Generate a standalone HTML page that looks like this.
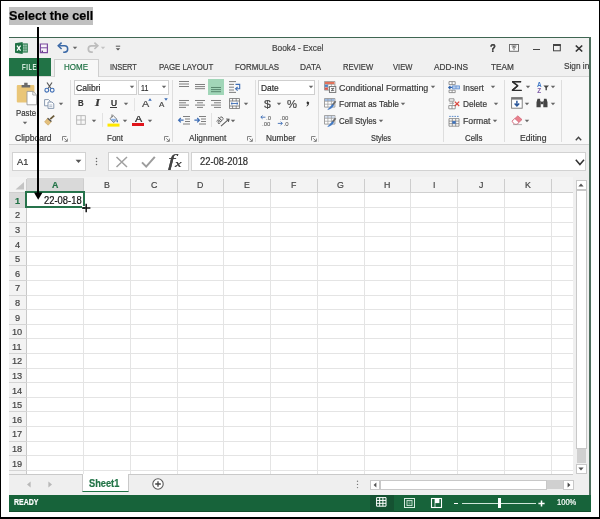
<!DOCTYPE html>
<html>
<head>
<meta charset="utf-8">
<title>Select the cell</title>
<style>
*{box-sizing:border-box;margin:0;padding:0}
html,body{width:600px;height:519px;overflow:hidden;background:#fff}
body{position:relative;font-family:"Liberation Sans",sans-serif;color:#444;font-size:9px}
.a{position:absolute}
svg{overflow:visible}
.t{position:absolute;white-space:nowrap;line-height:1;-webkit-text-stroke:0.2px currentColor}
#in,#ov{will-change:transform}
#frame{left:0;top:0;width:600px;height:519px;border:1px solid #000;border-bottom-width:2px;z-index:50;pointer-events:none}
#label{left:9px;top:7px;width:84px;height:18px;background:#c0c0c0}
#win{left:9px;top:37px;width:582px;height:475px;background:#f0f0f0;border:1px solid #3f6652;border-left:none;border-bottom:none;border-right:none;overflow:hidden}
#in{left:-9px;top:-38px;width:600px;height:519px}
.sep{width:1px;top:80px;height:62px;background:#dedede}
.vl{top:192px;width:1px;height:282px;background:#e4e4e4}
.vh{top:179px;width:1px;height:13px;background:#cdcdcd}
.hl{left:26px;height:1px;width:547.3px;background:#e4e4e4}
</style>
</head>
<body>
<div class="a" id="label"></div>
<div class="a" id="win"><div class="a" id="in">
<svg class="a" style="left:14.8px;top:41.8px;" width="14" height="12" viewBox="0 0 14 12"><rect x="6" y="1.4" width="6.8" height="9.2" fill="#2a7a4e"/><path d="M8.9 2.6v6.8M11 2.6v6.8" stroke="#cfe8da" stroke-width="1.2"/><path d="M7.5 4.8h5M7.5 7.2h5" stroke="#2a7a4e" stroke-width="0.6"/><path d="M0 1.3L7.6 0v12L0 10.7z" fill="#1f7145"/><path d="M2 3.6L5.6 8.6M5.6 3.6L2 8.6" stroke="#fff" stroke-width="1.3"/></svg>
<svg class="a" style="left:38.5px;top:42.6px;" width="10" height="10" viewBox="0 0 10 10"><path d="M1.4 1h7v8.6h-7z" fill="#f6f2f9" stroke="#7a4a9e" stroke-width="1.2"/><path d="M1.4 4.8h7" stroke="#7a4a9e" stroke-width="1"/><rect x="2.6" y="7.6" width="1.4" height="1.4" fill="#5a3a7a"/></svg>
<svg class="a" style="left:57px;top:42px;" width="13" height="11" viewBox="0 0 13 11"><path d="M2.2 3.8h5.3a3.2 3.2 0 0 1 0 6.4h-1.3" fill="none" stroke="#3a68a6" stroke-width="1.5"/><path d="M4.6 0.6L1.2 3.8L4.6 7" fill="none" stroke="#3a68a6" stroke-width="1.5"/></svg>
<svg class="a" style="left:71.5px;top:45.5px;" width="6" height="4" viewBox="0 0 6 4"><polygon points="0.8,0.8 5.2,0.8 3,3.2" fill="#666"/></svg>
<svg class="a" style="left:86px;top:42px;" width="13" height="11" viewBox="0 0 13 11"><path d="M10.8 3.8h-5.3a3.2 3.2 0 0 0 0 6.4h1.3" fill="none" stroke="#bdbdbd" stroke-width="1.7"/><path d="M8.4 0.6L11.8 3.8L8.4 7" fill="none" stroke="#bdbdbd" stroke-width="1.7"/></svg>
<svg class="a" style="left:100px;top:45.5px;" width="6" height="4" viewBox="0 0 6 4"><polygon points="0.8,0.8 5.2,0.8 3,3.2" fill="#c4c4c4"/></svg>
<svg class="a" style="left:114.8px;top:45.3px;" width="6" height="7" viewBox="0 0 6 7"><path d="M0.8 1.2h4.4" stroke="#555" stroke-width="1"/><polygon points="0.8,3.2 5.2,3.2 3,5.6" fill="#555"/></svg>
<div class="t" style="left:271.50px;top:43.89px;font-size:9.2px;color:#444;transform:scaleX(0.9074);transform-origin:0 50%;">Book4 - Excel</div>
<div class="t" style="left:490.20px;top:42.57px;font-size:11.5px;color:#444;transform:scaleX(0.8257);transform-origin:0 50%;font-weight:bold;text-shadow:0 0 0.3px #444;">?</div>
<svg class="a" style="left:509.3px;top:44.2px;" width="10" height="8" viewBox="0 0 10 8"><rect x="0.5" y="0.5" width="9" height="6.8" fill="#fbfbfb" stroke="#6e6e6e" stroke-width="1"/><path d="M5 6.2V2.6M3.2 4.2L5 2.4L6.8 4.2M2.6 2h4.8" fill="none" stroke="#555" stroke-width="0.9"/></svg>
<div class="a" style="left:532.5px;top:48.7px;width:7px;height:1.8px;background:#444;"></div>
<svg class="a" style="left:553.2px;top:44.3px;" width="8" height="8" viewBox="0 0 8 8"><rect x="0.5" y="1" width="6.8" height="5.8" fill="none" stroke="#444" stroke-width="1"/><rect x="0" y="0" width="7.8" height="2" fill="#444"/></svg>
<svg class="a" style="left:574.5px;top:44.5px;" width="8" height="7" viewBox="0 0 8 7"><path d="M0.8 0.5L7.2 6.5M7.2 0.5L0.8 6.5" stroke="#333" stroke-width="1.7"/></svg>
<div class="a" style="left:9px;top:58.3px;width:41.5px;height:17.7px;background:#217346;"></div>
<div class="t" style="left:22.00px;top:62.74px;font-size:9.3px;color:#f2fff6;transform:scaleX(0.6405);transform-origin:0 50%;letter-spacing:1.0px;">FILE</div>
<div class="a" style="left:9px;top:76px;width:581px;height:68.5px;background:#f8f8f8;"></div>
<div class="a" style="left:9px;top:75.8px;width:581px;height:1px;background:#d8d8d8;"></div>
<div class="a" style="left:54px;top:58.7px;width:44.5px;height:18.3px;background:#f8f8f8;border:1px solid #cfcfcf;border-bottom:none"></div>
<div class="t" style="left:64.00px;top:63.04px;font-size:8.7px;color:#217346;transform:scaleX(0.9195);transform-origin:0 50%;">HOME</div>
<div class="t" style="left:110.00px;top:63.04px;font-size:8.7px;color:#3c3c3c;transform:scaleX(0.8442);transform-origin:0 50%;">INSERT</div>
<div class="t" style="left:158.80px;top:63.04px;font-size:8.7px;color:#3c3c3c;transform:scaleX(0.9050);transform-origin:0 50%;">PAGE LAYOUT</div>
<div class="t" style="left:234.80px;top:63.04px;font-size:8.7px;color:#3c3c3c;transform:scaleX(0.9103);transform-origin:0 50%;">FORMULAS</div>
<div class="t" style="left:300.00px;top:63.04px;font-size:8.7px;color:#3c3c3c;transform:scaleX(0.9584);transform-origin:0 50%;">DATA</div>
<div class="t" style="left:342.60px;top:63.04px;font-size:8.7px;color:#3c3c3c;transform:scaleX(0.8799);transform-origin:0 50%;">REVIEW</div>
<div class="t" style="left:393.00px;top:63.04px;font-size:8.7px;color:#3c3c3c;transform:scaleX(0.8725);transform-origin:0 50%;">VIEW</div>
<div class="t" style="left:434.40px;top:63.04px;font-size:8.7px;color:#3c3c3c;transform:scaleX(0.9561);transform-origin:0 50%;">ADD-INS</div>
<div class="t" style="left:490.70px;top:63.04px;font-size:8.7px;color:#3c3c3c;transform:scaleX(0.9476);transform-origin:0 50%;">TEAM</div>
<div class="t" style="left:563.70px;top:60.65px;font-size:9.7px;color:#3c3c3c;transform:scaleX(0.8531);transform-origin:0 50%;">Sign in</div>
<div class="a" style="left:9px;top:144px;width:581px;height:1px;background:#d2d2d2;"></div>
<div class="a" style="left:9px;top:145px;width:581px;height:349.5px;background:#efefef;"></div>
<div class="a sep" style="left:69.7px"></div>
<div class="a sep" style="left:171.7px"></div>
<div class="a sep" style="left:254.7px"></div>
<div class="a sep" style="left:318.2px"></div>
<div class="a sep" style="left:443px"></div>
<div class="a sep" style="left:504.2px"></div>
<div class="a sep" style="left:560.7px"></div>
<div class="t" style="left:14.50px;top:133.69px;font-size:9px;color:#383838;transform:scaleX(0.9476);transform-origin:0 50%;">Clipboard</div>
<svg class="a" style="left:62px;top:136px;" width="6" height="6" viewBox="0 0 6 6"><path d="M0.5 4.5V0.5H4.5" fill="none" stroke="#777" stroke-width="0.9"/><path d="M2.3 2.3L5 5M5.4 2.6V5.4H2.6" fill="none" stroke="#777" stroke-width="0.9"/></svg>
<div class="t" style="left:107.00px;top:133.69px;font-size:9px;color:#383838;transform:scaleX(0.8885);transform-origin:0 50%;">Font</div>
<svg class="a" style="left:164px;top:136px;" width="6" height="6" viewBox="0 0 6 6"><path d="M0.5 4.5V0.5H4.5" fill="none" stroke="#777" stroke-width="0.9"/><path d="M2.3 2.3L5 5M5.4 2.6V5.4H2.6" fill="none" stroke="#777" stroke-width="0.9"/></svg>
<div class="t" style="left:188.70px;top:133.69px;font-size:9px;color:#383838;transform:scaleX(0.9321);transform-origin:0 50%;">Alignment</div>
<svg class="a" style="left:247px;top:136px;" width="6" height="6" viewBox="0 0 6 6"><path d="M0.5 4.5V0.5H4.5" fill="none" stroke="#777" stroke-width="0.9"/><path d="M2.3 2.3L5 5M5.4 2.6V5.4H2.6" fill="none" stroke="#777" stroke-width="0.9"/></svg>
<div class="t" style="left:266.00px;top:133.69px;font-size:9px;color:#383838;transform:scaleX(0.9217);transform-origin:0 50%;">Number</div>
<svg class="a" style="left:310.5px;top:136px;" width="6" height="6" viewBox="0 0 6 6"><path d="M0.5 4.5V0.5H4.5" fill="none" stroke="#777" stroke-width="0.9"/><path d="M2.3 2.3L5 5M5.4 2.6V5.4H2.6" fill="none" stroke="#777" stroke-width="0.9"/></svg>
<div class="t" style="left:371.00px;top:133.69px;font-size:9px;color:#383838;transform:scaleX(0.8161);transform-origin:0 50%;">Styles</div>
<div class="t" style="left:465.00px;top:133.69px;font-size:9px;color:#383838;transform:scaleX(0.8748);transform-origin:0 50%;">Cells</div>
<div class="t" style="left:519.50px;top:133.69px;font-size:9px;color:#383838;transform:scaleX(0.9630);transform-origin:0 50%;">Editing</div>
<svg class="a" style="left:575px;top:135.5px;" width="7" height="5" viewBox="0 0 7 5"><path d="M0.8 4.2L3.5 1.3L6.2 4.2" fill="none" stroke="#444" stroke-width="1.4"/></svg>
<svg class="a" style="left:16px;top:81.5px;" width="21" height="24" viewBox="0 0 21 24"><rect x="0.8" y="3" width="17.6" height="17.6" rx="1" fill="#eac678"/><path d="M5.6 5.4V3h2.6V0.8h3.4V3h2.6V5.4z" fill="#6a6a6a"/><path d="M11 9.4h6l3.6 3.4V22.8H11z" fill="#fff" stroke="#9a9a9a" stroke-width="0.9"/><path d="M16.8 9.6v3.4h3.6" fill="none" stroke="#9a9a9a" stroke-width="0.8"/></svg>
<div class="t" style="left:15.70px;top:107.84px;font-size:9.5px;color:#383838;transform:scaleX(0.8274);transform-origin:0 50%;">Paste</div>
<svg class="a" style="left:22px;top:121px;" width="6" height="4" viewBox="0 0 6 4"><polygon points="0.8,0.8 5.2,0.8 3,3.2" fill="#666"/></svg>
<svg class="a" style="left:44px;top:82px;" width="11" height="11" viewBox="0 0 11 11"><path d="M3 0.5L7 6.5M8 0.5L4 6.5" stroke="#5a5a5a" stroke-width="1.2" fill="none"/><circle cx="2.8" cy="8.2" r="1.9" fill="none" stroke="#3d6db5" stroke-width="1.1"/><circle cx="8.2" cy="8.2" r="1.9" fill="none" stroke="#3d6db5" stroke-width="1.1"/></svg>
<svg class="a" style="left:44px;top:98.5px;" width="11" height="10" viewBox="0 0 11 10"><path d="M0.6 0.6h4l1.6 1.6v4.6h-5.6z" fill="#fff" stroke="#7d8ea8" stroke-width="0.9"/><path d="M4 3h4l1.8 1.8v4.6H4z" fill="#fff" stroke="#7d8ea8" stroke-width="0.9"/><path d="M5.3 6h3M5.3 7.6h3" stroke="#7d8ea8" stroke-width="0.6"/></svg>
<svg class="a" style="left:58px;top:102px;" width="6" height="4" viewBox="0 0 6 4"><polygon points="0.8,0.8 5.2,0.8 3,3.2" fill="#666"/></svg>
<svg class="a" style="left:44px;top:115px;" width="12" height="11" viewBox="0 0 12 11"><path d="M6.2 4.2L10.2 0.6" stroke="#6a5a3a" stroke-width="1.8"/><path d="M3.6 3.2L7.4 6.6L4.2 10.2L0.6 7z" fill="#e3bf7c" stroke="#c9a25a" stroke-width="0.6"/><path d="M3.6 3.2L7.4 6.6" stroke="#555" stroke-width="1.3"/></svg>
<div class="a" style="left:73.5px;top:79.5px;width:63.7px;height:15.6px;background:#fff;border:1px solid #cfcfcf"></div>
<div class="a" style="left:138px;top:79.5px;width:31.4px;height:15.6px;background:#fff;border:1px solid #cfcfcf"></div>
<div class="t" style="left:76.00px;top:82.75px;font-size:9.5px;color:#2a2a2a;transform:scaleX(0.9100);transform-origin:0 50%;">Calibri</div>
<svg class="a" style="left:129px;top:85.3px;" width="6" height="4" viewBox="0 0 6 4"><polygon points="0.8,0.8 5.2,0.8 3,3.2" fill="#666"/></svg>
<div class="t" style="left:140.90px;top:82.64px;font-size:9.5px;color:#2a2a2a;transform:scaleX(0.7403);transform-origin:0 50%;">11</div>
<svg class="a" style="left:160.7px;top:85.3px;" width="6" height="4" viewBox="0 0 6 4"><polygon points="0.8,0.8 5.2,0.8 3,3.2" fill="#666"/></svg>
<div class="t" style="left:78.30px;top:98.99px;font-size:9.2px;color:#3a3a3a;transform:scaleX(0.8579);transform-origin:0 50%;font-weight:bold;">B</div>
<div class="t" style="left:95.00px;top:99.05px;font-size:9.5px;color:#3a3a3a;transform:scaleX(1.3522);transform-origin:0 50%;font-weight:bold;font-style:italic;font-family:'Liberation Serif',serif;">I</div>
<div class="t" style="left:110.70px;top:98.69px;font-size:9px;color:#3a3a3a;transform:scaleX(0.9231);transform-origin:0 50%;text-shadow:0 0 0.4px #3a3a3a;">U</div>
<div class="a" style="left:110.3px;top:107.3px;width:6.8px;height:0.9px;background:#3a3a3a;"></div>
<svg class="a" style="left:122.7px;top:101.8px;" width="6" height="4" viewBox="0 0 6 4"><polygon points="0.8,0.8 5.2,0.8 3,3.2" fill="#666"/></svg>
<div class="a" style="left:133.5px;top:97.5px;width:1px;height:13px;background:#e4e4e4;"></div>
<div class="t" style="left:141.80px;top:99.40px;font-size:9.8px;color:#444;transform:scaleX(1.1014);transform-origin:0 50%;">A</div>
<svg class="a" style="left:147.5px;top:98px;" width="4" height="3" viewBox="0 0 4 3"><polygon points="0.2,2.8 3.8,2.8 2,0.3" fill="#3d6db5"/></svg>
<div class="t" style="left:158.70px;top:101.08px;font-size:8px;color:#444;transform:scaleX(0.9932);transform-origin:0 50%;">A</div>
<svg class="a" style="left:163.7px;top:98px;" width="4" height="3" viewBox="0 0 4 3"><polygon points="0.2,0.3 3.8,0.3 2,2.8" fill="#3d6db5"/></svg>
<svg class="a" style="left:76px;top:115px;" width="10" height="10" viewBox="0 0 10 10"><path d="M0.6 0.6h8.8v8.8h-8.8zM5 0.6v8.8M0.6 5h8.8" fill="none" stroke="#b5b5b5" stroke-width="0.9"/></svg>
<svg class="a" style="left:91px;top:118.5px;" width="6" height="4" viewBox="0 0 6 4"><polygon points="0.8,0.8 5.2,0.8 3,3.2" fill="#666"/></svg>
<div class="a" style="left:101.5px;top:113px;width:1px;height:14px;background:#e2e2e2;"></div>
<svg class="a" style="left:107.5px;top:113.5px;" width="11" height="13" viewBox="0 0 11 13"><path d="M2 4.6L5.2 1.6L9 5.4L5.6 8.6z" fill="#fff" stroke="#6a6a6a" stroke-width="0.9"/><path d="M4 0.4v3" stroke="#6a6a6a" stroke-width="0.9"/><path d="M9.2 5.6c1 1.4 1 2.4 0 2.8c-0.9-0.4-0.9-1.4 0-2.8z" fill="#3d6db5"/><path d="M2.4 4.8h6.2L5.6 8z" fill="#8fb4e6"/><rect x="-0.5" y="9.6" width="12" height="3" fill="#ffe800"/></svg>
<svg class="a" style="left:122px;top:118.5px;" width="6" height="4" viewBox="0 0 6 4"><polygon points="0.8,0.8 5.2,0.8 3,3.2" fill="#666"/></svg>
<div class="t" style="left:134.50px;top:114.89px;font-size:9px;color:#444;transform:scaleX(1.1993);transform-origin:0 50%;text-shadow:0 0 0.4px #444;">A</div>
<div class="a" style="left:132.2px;top:123.2px;width:11.5px;height:3.3px;background:#e0141b;"></div>
<svg class="a" style="left:147px;top:118.5px;" width="6" height="4" viewBox="0 0 6 4"><polygon points="0.8,0.8 5.2,0.8 3,3.2" fill="#666"/></svg>
<svg class="a" style="left:179px;top:80.6px;" width="10" height="8.5" viewBox="0 0 10 8.5"><path d="M0.0 0.5h10" stroke="#707070" stroke-width="0.9"/><path d="M0.0 3.0h10" stroke="#707070" stroke-width="0.9"/><path d="M0.0 5.5h10" stroke="#707070" stroke-width="0.9"/></svg>
<svg class="a" style="left:195px;top:84.3px;" width="10" height="7.300000000000001" viewBox="0 0 10 7.300000000000001"><path d="M0.0 0.5h10" stroke="#707070" stroke-width="0.9"/><path d="M0.0 2.6h10" stroke="#707070" stroke-width="0.9"/><path d="M0.0 4.7h10" stroke="#707070" stroke-width="0.9"/></svg>
<div class="a" style="left:208px;top:79px;width:16.2px;height:16.2px;background:#a1d6b8;"></div>
<svg class="a" style="left:211px;top:87.4px;" width="10" height="7.300000000000001" viewBox="0 0 10 7.300000000000001"><path d="M0.0 0.5h10" stroke="#4f7f66" stroke-width="0.9"/><path d="M0.0 2.6h10" stroke="#4f7f66" stroke-width="0.9"/><path d="M0.0 4.7h10" stroke="#4f7f66" stroke-width="0.9"/></svg>
<svg class="a" style="left:229px;top:81px;" width="12" height="12" viewBox="0 0 12 12"><path d="M0 0.6h7M0 3.4h5M0 6.2h5M0 9h5M0 11.4h7" stroke="#707070" stroke-width="0.9"/><path d="M6.5 3.4h4.2v4.4H7.2" fill="none" stroke="#3d6db5" stroke-width="1.1"/><path d="M8.6 6L6.6 7.8L8.6 9.6" fill="none" stroke="#3d6db5" stroke-width="1.1"/></svg>
<svg class="a" style="left:179px;top:99.6px;" width="10" height="10.2" viewBox="0 0 10 10.2"><path d="M0.0 0.5h10" stroke="#707070" stroke-width="0.9"/><path d="M0.0 2.8h7" stroke="#707070" stroke-width="0.9"/><path d="M0.0 5.1h10" stroke="#707070" stroke-width="0.9"/><path d="M0.0 7.4h7" stroke="#707070" stroke-width="0.9"/></svg>
<svg class="a" style="left:195px;top:99.6px;" width="10" height="10.2" viewBox="0 0 10 10.2"><path d="M0.0 0.5h10" stroke="#707070" stroke-width="0.9"/><path d="M2.0 2.8h6" stroke="#707070" stroke-width="0.9"/><path d="M0.0 5.1h10" stroke="#707070" stroke-width="0.9"/><path d="M2.0 7.4h6" stroke="#707070" stroke-width="0.9"/></svg>
<svg class="a" style="left:211px;top:99.6px;" width="10" height="10.2" viewBox="0 0 10 10.2"><path d="M0.0 0.5h10" stroke="#707070" stroke-width="0.9"/><path d="M3.0 2.8h7" stroke="#707070" stroke-width="0.9"/><path d="M0.0 5.1h10" stroke="#707070" stroke-width="0.9"/><path d="M3.0 7.4h7" stroke="#707070" stroke-width="0.9"/></svg>
<svg class="a" style="left:229px;top:98px;" width="11" height="11" viewBox="0 0 11 11"><path d="M0.5 0.5h10v10h-10zM0.5 3h10M0.5 8h10M3.6 0.5V3M7.2 0.5V3M3.6 8v2.5M7.2 8v2.5" fill="none" stroke="#707070" stroke-width="0.8"/><path d="M2 5.5h7M3.4 4.2L2 5.5L3.4 6.8M7.6 4.2L9 5.5L7.6 6.8" fill="none" stroke="#3d6db5" stroke-width="0.9"/></svg>
<svg class="a" style="left:243px;top:101.6px;" width="6" height="4" viewBox="0 0 6 4"><polygon points="0.8,0.8 5.2,0.8 3,3.2" fill="#666"/></svg>
<svg class="a" style="left:178px;top:116px;" width="12" height="9" viewBox="0 0 12 9"><path d="M5 0.5h7M7 3h5M7 5.5h5M5 8h7" stroke="#707070" stroke-width="0.9"/><path d="M5.6 4.2H0.8M2.8 2L0.6 4.2L2.8 6.4" fill="none" stroke="#3d6db5" stroke-width="1.2"/></svg>
<svg class="a" style="left:194px;top:116px;" width="12" height="9" viewBox="0 0 12 9"><path d="M5 0.5h7M7 3h5M7 5.5h5M5 8h7" stroke="#707070" stroke-width="0.9"/><path d="M0.4 4.2H5.2M3.2 2L5.4 4.2L3.2 6.4" fill="none" stroke="#3d6db5" stroke-width="1.2"/></svg>
<div class="a" style="left:210.5px;top:113px;width:1px;height:14px;background:#e2e2e2;"></div>
<svg class="a" style="left:217px;top:114.5px;" width="13" height="12" viewBox="0 0 13 12"><text x="0.5" y="7" font-size="7.6" font-family="Liberation Sans,sans-serif" fill="#3c3c3c" transform="rotate(-48 4 7)">ab</text><path d="M4 11.2L11.6 4.4M9.2 4L12 4.2L11.4 6.8" fill="none" stroke="#5a5a5a" stroke-width="1.1"/></svg>
<svg class="a" style="left:230px;top:118.5px;" width="6" height="4" viewBox="0 0 6 4"><polygon points="0.8,0.8 5.2,0.8 3,3.2" fill="#666"/></svg>
<div class="a" style="left:258px;top:79.5px;width:57px;height:15.6px;background:#fff;border:1px solid #cfcfcf"></div>
<div class="t" style="left:261.00px;top:82.75px;font-size:9.5px;color:#2a2a2a;transform:scaleX(0.8821);transform-origin:0 50%;">Date</div>
<svg class="a" style="left:307.5px;top:85.3px;" width="6" height="4" viewBox="0 0 6 4"><polygon points="0.8,0.8 5.2,0.8 3,3.2" fill="#666"/></svg>
<div class="t" style="left:263.70px;top:98.61px;font-size:11px;color:#444;transform:scaleX(1.1117);transform-origin:0 50%;">$</div>
<svg class="a" style="left:275.7px;top:102px;" width="6" height="4" viewBox="0 0 6 4"><polygon points="0.8,0.8 5.2,0.8 3,3.2" fill="#666"/></svg>
<div class="t" style="left:287.00px;top:98.61px;font-size:11px;color:#444;transform:scaleX(1.0223);transform-origin:0 50%;">%</div>
<svg class="a" style="left:304.5px;top:100.5px;" width="5" height="6" viewBox="0 0 5 6"><path d="M1.6 1.6a1.3 1.3 0 1 1 2.4 0.9c-0.2 1.3-0.9 2.3-2.3 3l-0.3-0.5c0.8-0.5 1.2-1.1 1.2-1.8c-0.6-0.2-1.2-0.8-1-1.6z" fill="#333"/></svg>
<svg class="a" style="left:260px;top:114.5px;" width="13" height="11" viewBox="0 0 13 11"><path d="M5.4 2.2H1M2.6 0.6L0.8 2.2L2.6 3.8" fill="none" stroke="#3d6db5" stroke-width="0.9"/><text x="6" y="4.8" font-size="6" font-family="Liberation Sans,sans-serif" fill="#444">.0</text><text x="2" y="10.6" font-size="6" font-family="Liberation Sans,sans-serif" fill="#444">.00</text></svg>
<svg class="a" style="left:276.5px;top:114.5px;" width="13" height="11" viewBox="0 0 13 11"><text x="3" y="4.8" font-size="6" font-family="Liberation Sans,sans-serif" fill="#444">.00</text><path d="M0.8 8.4H5.2M3.6 6.8L5.4 8.4L3.6 10" fill="none" stroke="#3d6db5" stroke-width="0.9"/><text x="6.6" y="10.6" font-size="6" font-family="Liberation Sans,sans-serif" fill="#444">.0</text></svg>
<svg class="a" style="left:324px;top:80.8px;" width="12" height="12" viewBox="0 0 12 12"><path d="M0.5 0.5h10.4v8.6h-10.4z" fill="#fff" stroke="#8a8a8a" stroke-width="0.8"/><rect x="0.9" y="0.9" width="9.6" height="2.2" fill="#fff"/><path d="M0.5 3.3h10.4M0.5 6.2h10.4M3.9 0.5v8.6M7.4 0.5v8.6" fill="none" stroke="#9a9a9a" stroke-width="0.7"/><rect x="0.9" y="0.9" width="9.6" height="2.2" fill="#e2725a"/><rect x="0.9" y="3.7" width="3" height="2.2" fill="#4f81c7"/><rect x="0.9" y="6.6" width="3" height="2.2" fill="#d9534a"/><rect x="5.4" y="5.6" width="6.4" height="5.8" fill="#fff" stroke="#6a6a6a" stroke-width="0.9"/><path d="M7 7.6h3.2M7 9.4h3.2M9.4 6.8L7.8 10.2" stroke="#555" stroke-width="0.8"/></svg>
<div class="t" style="left:338.70px;top:82.75px;font-size:9.5px;color:#383838;transform:scaleX(0.9344);transform-origin:0 50%;">Conditional Formatting</div>
<svg class="a" style="left:429.5px;top:85.3px;" width="6" height="4" viewBox="0 0 6 4"><polygon points="0.8,0.8 5.2,0.8 3,3.2" fill="#666"/></svg>
<svg class="a" style="left:324px;top:97.5px;" width="12" height="12" viewBox="0 0 12 12"><path d="M0.5 0.5h10.4v8.6h-10.4z" fill="#fff" stroke="#8a8a8a" stroke-width="0.8"/><rect x="0.9" y="0.9" width="9.6" height="2.2" fill="#9dbbe3"/><path d="M0.5 3.3h10.4M0.5 6.2h10.4M3.9 0.5v8.6M7.4 0.5v8.6" fill="none" stroke="#9a9a9a" stroke-width="0.7"/><path d="M11.6 3.2L8.2 7.4" stroke="#6a6a6a" stroke-width="1.7"/><path d="M8.6 6.4L9.6 7.6C8.4 9.6 6.4 11 3.8 11.6C5.4 10.2 6.6 8.4 8.6 6.4z" fill="#3f78c6" stroke="#3f78c6" stroke-width="0.6"/></svg>
<div class="t" style="left:338.70px;top:99.25px;font-size:9.5px;color:#383838;transform:scaleX(0.8832);transform-origin:0 50%;">Format as Table</div>
<svg class="a" style="left:399.7px;top:101.8px;" width="6" height="4" viewBox="0 0 6 4"><polygon points="0.8,0.8 5.2,0.8 3,3.2" fill="#666"/></svg>
<svg class="a" style="left:324px;top:114.5px;" width="12" height="12" viewBox="0 0 12 12"><path d="M0.5 0.5h10.4v8.6h-10.4z" fill="#fff" stroke="#8a8a8a" stroke-width="0.8"/><rect x="0.9" y="0.9" width="9.6" height="2.2" fill="#d4dfef"/><path d="M0.5 3.3h10.4M0.5 6.2h10.4M3.9 0.5v8.6M7.4 0.5v8.6" fill="none" stroke="#9a9a9a" stroke-width="0.7"/><path d="M11.6 3.2L8.2 7.4" stroke="#6a6a6a" stroke-width="1.7"/><path d="M8.6 6.4L9.6 7.6C8.4 9.6 6.4 11 3.8 11.6C5.4 10.2 6.6 8.4 8.6 6.4z" fill="#3f78c6" stroke="#3f78c6" stroke-width="0.6"/></svg>
<div class="t" style="left:338.70px;top:116.25px;font-size:9.5px;color:#383838;transform:scaleX(0.8379);transform-origin:0 50%;">Cell Styles</div>
<svg class="a" style="left:377.7px;top:119px;" width="6" height="4" viewBox="0 0 6 4"><polygon points="0.8,0.8 5.2,0.8 3,3.2" fill="#666"/></svg>
<svg class="a" style="left:448.3px;top:81px;" width="12" height="12" viewBox="0 0 12 12"><path d="M1 0.6h6.2v3h-6.2zM4.1 0.6v3M1 9.2h6.2v2.4h-6.2zM4.1 9.2v2.4" fill="#fff" stroke="#7c7c7c" stroke-width="0.8"/><rect x="4.6" y="4.9" width="6.8" height="3" fill="#b9cfec" stroke="#5b8bd0" stroke-width="0.8"/><path d="M8 4.9v3" stroke="#5b8bd0" stroke-width="0.7"/><path d="M4.2 6.4H0.8M2.4 4.8L0.7 6.4L2.4 8" fill="none" stroke="#2f63ad" stroke-width="1.1"/></svg>
<div class="t" style="left:463.00px;top:82.75px;font-size:9.5px;color:#383838;transform:scaleX(0.8713);transform-origin:0 50%;">Insert</div>
<svg class="a" style="left:490px;top:85.3px;" width="6" height="4" viewBox="0 0 6 4"><polygon points="0.8,0.8 5.2,0.8 3,3.2" fill="#666"/></svg>
<svg class="a" style="left:448.3px;top:97.5px;" width="12" height="12" viewBox="0 0 12 12"><path d="M1.2 0.8h4.8v2.4h-4.8zM0.8 7.6h6.4v3.2h-6.4zM4 7.6v3.2" fill="#fff" stroke="#7c7c7c" stroke-width="0.8"/><path d="M1.4 5.2h4M4 3.9l1.5 1.3L4 6.5" fill="none" stroke="#8a8a8a" stroke-width="0.8"/><path d="M6.8 3.6L11.2 8M11.2 3.6L6.8 8" stroke="#d9443a" stroke-width="1.2"/></svg>
<div class="t" style="left:463.00px;top:99.25px;font-size:9.5px;color:#383838;transform:scaleX(0.8740);transform-origin:0 50%;">Delete</div>
<svg class="a" style="left:492.7px;top:101.8px;" width="6" height="4" viewBox="0 0 6 4"><polygon points="0.8,0.8 5.2,0.8 3,3.2" fill="#666"/></svg>
<svg class="a" style="left:448.3px;top:114.5px;" width="12" height="12" viewBox="0 0 12 12"><path d="M1.2 1.4h9.6" stroke="#4a7ec4" stroke-width="0.9" stroke-dasharray="1.6 1"/><path d="M1 3.6h10v7.6h-10zM1 6.1h10M1 8.7h10M4.3 3.6v7.6M7.7 3.6v7.6" fill="#fff" stroke="#7c7c7c" stroke-width="0.8"/><rect x="4.3" y="6.1" width="3.4" height="2.6" fill="#3f73bd"/></svg>
<div class="t" style="left:463.00px;top:116.25px;font-size:9.5px;color:#383838;transform:scaleX(0.9141);transform-origin:0 50%;">Format</div>
<svg class="a" style="left:491.7px;top:119px;" width="6" height="4" viewBox="0 0 6 4"><polygon points="0.8,0.8 5.2,0.8 3,3.2" fill="#666"/></svg>
<div class="t" style="left:510.50px;top:78.45px;font-size:15px;color:#2e2e2e;transform:scaleX(1.2187);transform-origin:0 50%;text-shadow:0 0 0.4px #333;">Σ</div>
<svg class="a" style="left:525px;top:85.3px;" width="6" height="4" viewBox="0 0 6 4"><polygon points="0.8,0.8 5.2,0.8 3,3.2" fill="#666"/></svg>
<svg class="a" style="left:536.5px;top:80.5px;" width="13" height="13" viewBox="0 0 13 13"><text x="0" y="5.6" font-size="6.4" font-weight="bold" font-family="Liberation Sans,sans-serif" fill="#3f78c6">A</text><text x="0.2" y="12.2" font-size="6.4" font-weight="bold" font-family="Liberation Sans,sans-serif" fill="#7b5aa6">Z</text><path d="M6.4 4.6h5.6l-2.1 2.2v2.4h-1.4v-2.4z" fill="#444"/></svg>
<svg class="a" style="left:549.5px;top:85.3px;" width="6" height="4" viewBox="0 0 6 4"><polygon points="0.8,0.8 5.2,0.8 3,3.2" fill="#666"/></svg>
<svg class="a" style="left:510.8px;top:97.3px;" width="12" height="12" viewBox="0 0 12 12"><rect x="0.6" y="0.6" width="10.6" height="10.6" fill="#fff" stroke="#777" stroke-width="0.9"/><rect x="0.6" y="0.6" width="10.6" height="2" fill="#777"/><path d="M5.9 3.8v5M3.6 6.6L5.9 9L8.2 6.6" fill="none" stroke="#2b579a" stroke-width="1.5"/></svg>
<svg class="a" style="left:524px;top:101.8px;" width="6" height="4" viewBox="0 0 6 4"><polygon points="0.8,0.8 5.2,0.8 3,3.2" fill="#666"/></svg>
<svg class="a" style="left:536px;top:98.2px;" width="12" height="10" viewBox="0 0 12 10"><path d="M1.5 0.8h2.6v2h0.6v6.4H0.5V4.2zM10.5 0.8H7.9v2H7.3v6.4h4.2V4.2z" fill="#444"/><rect x="4.6" y="3.6" width="2.8" height="2.6" fill="#444"/></svg>
<svg class="a" style="left:549.5px;top:101.8px;" width="6" height="4" viewBox="0 0 6 4"><polygon points="0.8,0.8 5.2,0.8 3,3.2" fill="#666"/></svg>
<svg class="a" style="left:511px;top:115.2px;" width="12" height="10" viewBox="0 0 12 10"><path d="M1 6.2L6.8 0.8L11 4.6L6 9.2H3.6z" fill="#e9808c" stroke="#c9546a" stroke-width="0.6"/><path d="M1 6.2L3.8 3.6L8 7.4L6 9.2H3.6z" fill="#fff" stroke="#c9546a" stroke-width="0.6"/><path d="M2 9.6h9" stroke="#999" stroke-width="0.7"/></svg>
<svg class="a" style="left:524px;top:119px;" width="6" height="4" viewBox="0 0 6 4"><polygon points="0.8,0.8 5.2,0.8 3,3.2" fill="#666"/></svg>
<div class="a" style="left:11.7px;top:152.3px;width:74px;height:18.5px;background:#fff;border:1px solid #d2d2d2"></div>
<div class="t" style="left:16.70px;top:157.34px;font-size:9.5px;color:#333;transform:scaleX(0.9725);transform-origin:0 50%;">A1</div>
<svg class="a" style="left:75.2px;top:159px;" width="7" height="5" viewBox="0 0 7 5"><polygon points="0.6,0.8 6.4,0.8 3.5,4" fill="#555"/></svg>
<svg class="a" style="left:95.2px;top:157px;" width="3" height="9" viewBox="0 0 3 9"><circle cx="1.5" cy="1.4" r="0.75" fill="#666"/><circle cx="1.5" cy="4.4" r="0.75" fill="#666"/><circle cx="1.5" cy="7.4" r="0.75" fill="#666"/></svg>
<div class="a" style="left:108px;top:152.3px;width:80.5px;height:18.5px;background:#fff;border:1px solid #d2d2d2"></div>
<svg class="a" style="left:115px;top:155.5px;" width="14" height="12" viewBox="0 0 14 12"><path d="M1.5 1L12 11M12 1L1.5 11" stroke="#a0a0a0" stroke-width="1.5"/></svg>
<svg class="a" style="left:141px;top:155.5px;" width="15" height="12" viewBox="0 0 15 12"><path d="M1 6.4L5.2 10.6L13.8 0.8" fill="none" stroke="#9c9c9c" stroke-width="2"/></svg>
<div class="t" style="left:167.80px;top:153.46px;font-size:16px;color:#444;transform:scaleX(1.6198);transform-origin:0 50%;font-style:italic;font-family:'Liberation Serif',serif;text-shadow:0 0 0.4px #444;">f</div>
<div class="t" style="left:174.50px;top:158.41px;font-size:11px;color:#444;transform:scaleX(1.3312);transform-origin:0 50%;font-style:italic;font-family:'Liberation Serif',serif;text-shadow:0 0 0.4px #444;">x</div>
<div class="a" style="left:191px;top:152.3px;width:395px;height:18.5px;background:#fff;border:1px solid #d2d2d2"></div>
<div class="t" style="left:199.50px;top:156.70px;font-size:10px;color:#2e2e2e;transform:scaleX(0.9404);transform-origin:0 50%;">22-08-2018</div>
<svg class="a" style="left:575px;top:159px;" width="10" height="7" viewBox="0 0 10 7"><path d="M0.8 0.8L4.9 5.6L9 0.8" fill="none" stroke="#333" stroke-width="1.5"/></svg>
<div class="a" style="left:9px;top:177px;width:564.3px;height:297.3px;background:#fff;"></div>
<div class="a" style="left:9px;top:177px;width:564.3px;height:15px;background:#f3f3f3;"></div>
<div class="a" style="left:9px;top:192px;width:17.5px;height:282.3px;background:#f3f3f3;"></div>
<div class="a" style="left:26.5px;top:178.3px;width:57.3px;height:13.5px;background:#d9d9d9;border-bottom:1.6px solid #217346"></div>
<div class="a" style="left:9px;top:192.5px;width:17.8px;height:14.8px;background:#d9d9d9;border-right:1.6px solid #217346"></div>
<div class="a vl" style="left:25.80px;background:#c8c8c8"></div>
<div class="a vh" style="left:25.80px"></div>
<div class="a vl" style="left:83.20px"></div>
<div class="a vh" style="left:83.20px"></div>
<div class="a vl" style="left:129.95px"></div>
<div class="a vh" style="left:129.95px"></div>
<div class="a vl" style="left:176.70px"></div>
<div class="a vh" style="left:176.70px"></div>
<div class="a vl" style="left:223.45px"></div>
<div class="a vh" style="left:223.45px"></div>
<div class="a vl" style="left:270.20px"></div>
<div class="a vh" style="left:270.20px"></div>
<div class="a vl" style="left:316.95px"></div>
<div class="a vh" style="left:316.95px"></div>
<div class="a vl" style="left:363.70px"></div>
<div class="a vh" style="left:363.70px"></div>
<div class="a vl" style="left:410.45px"></div>
<div class="a vh" style="left:410.45px"></div>
<div class="a vl" style="left:457.20px"></div>
<div class="a vh" style="left:457.20px"></div>
<div class="a vl" style="left:503.95px"></div>
<div class="a vh" style="left:503.95px"></div>
<div class="a vl" style="left:550.70px"></div>
<div class="a vh" style="left:550.70px"></div>
<div class="a" style="left:9px;top:191.6px;width:564.3px;height:1px;background:#cfcfcf;"></div>
<div class="a hl" style="top:207.00px"></div>
<div class="a" style="left:9px;top:207.0px;width:17.5px;height:1px;background:#d4d4d4;"></div>
<div class="a hl" style="top:221.60px"></div>
<div class="a" style="left:9px;top:221.6px;width:17.5px;height:1px;background:#d4d4d4;"></div>
<div class="a hl" style="top:236.20px"></div>
<div class="a" style="left:9px;top:236.2px;width:17.5px;height:1px;background:#d4d4d4;"></div>
<div class="a hl" style="top:250.80px"></div>
<div class="a" style="left:9px;top:250.8px;width:17.5px;height:1px;background:#d4d4d4;"></div>
<div class="a hl" style="top:265.40px"></div>
<div class="a" style="left:9px;top:265.4px;width:17.5px;height:1px;background:#d4d4d4;"></div>
<div class="a hl" style="top:280.00px"></div>
<div class="a" style="left:9px;top:280.0px;width:17.5px;height:1px;background:#d4d4d4;"></div>
<div class="a hl" style="top:294.60px"></div>
<div class="a" style="left:9px;top:294.6px;width:17.5px;height:1px;background:#d4d4d4;"></div>
<div class="a hl" style="top:309.20px"></div>
<div class="a" style="left:9px;top:309.2px;width:17.5px;height:1px;background:#d4d4d4;"></div>
<div class="a hl" style="top:323.80px"></div>
<div class="a" style="left:9px;top:323.8px;width:17.5px;height:1px;background:#d4d4d4;"></div>
<div class="a hl" style="top:338.40px"></div>
<div class="a" style="left:9px;top:338.4px;width:17.5px;height:1px;background:#d4d4d4;"></div>
<div class="a hl" style="top:353.00px"></div>
<div class="a" style="left:9px;top:353.0px;width:17.5px;height:1px;background:#d4d4d4;"></div>
<div class="a hl" style="top:367.60px"></div>
<div class="a" style="left:9px;top:367.6px;width:17.5px;height:1px;background:#d4d4d4;"></div>
<div class="a hl" style="top:382.20px"></div>
<div class="a" style="left:9px;top:382.2px;width:17.5px;height:1px;background:#d4d4d4;"></div>
<div class="a hl" style="top:396.80px"></div>
<div class="a" style="left:9px;top:396.8px;width:17.5px;height:1px;background:#d4d4d4;"></div>
<div class="a hl" style="top:411.40px"></div>
<div class="a" style="left:9px;top:411.4px;width:17.5px;height:1px;background:#d4d4d4;"></div>
<div class="a hl" style="top:426.00px"></div>
<div class="a" style="left:9px;top:426.0px;width:17.5px;height:1px;background:#d4d4d4;"></div>
<div class="a hl" style="top:440.60px"></div>
<div class="a" style="left:9px;top:440.6px;width:17.5px;height:1px;background:#d4d4d4;"></div>
<div class="a hl" style="top:455.20px"></div>
<div class="a" style="left:9px;top:455.2px;width:17.5px;height:1px;background:#d4d4d4;"></div>
<div class="a hl" style="top:469.80px"></div>
<div class="a" style="left:9px;top:469.8px;width:17.5px;height:1px;background:#d4d4d4;"></div>
<div class="t" style="left:51.82px;top:180.00px;font-size:9.8px;color:#217346;transform:scaleX(0.9000);transform-origin:0 50%;font-weight:bold;">A</div>
<div class="t" style="left:104.13px;top:180.00px;font-size:9.8px;color:#444;transform:scaleX(0.9000);transform-origin:0 50%;">B</div>
<div class="t" style="left:150.64px;top:180.00px;font-size:9.8px;color:#444;transform:scaleX(0.9000);transform-origin:0 50%;">C</div>
<div class="t" style="left:197.39px;top:180.00px;font-size:9.8px;color:#444;transform:scaleX(0.9000);transform-origin:0 50%;">D</div>
<div class="t" style="left:244.38px;top:180.00px;font-size:9.8px;color:#444;transform:scaleX(0.9000);transform-origin:0 50%;">E</div>
<div class="t" style="left:291.38px;top:180.00px;font-size:9.8px;color:#444;transform:scaleX(0.9000);transform-origin:0 50%;">F</div>
<div class="t" style="left:337.39px;top:180.00px;font-size:9.8px;color:#444;transform:scaleX(0.9000);transform-origin:0 50%;">G</div>
<div class="t" style="left:384.39px;top:180.00px;font-size:9.8px;color:#444;transform:scaleX(0.9000);transform-origin:0 50%;">H</div>
<div class="t" style="left:433.10px;top:180.00px;font-size:9.8px;color:#444;transform:scaleX(0.9000);transform-origin:0 50%;">I</div>
<div class="t" style="left:478.87px;top:180.00px;font-size:9.8px;color:#444;transform:scaleX(0.9000);transform-origin:0 50%;">J</div>
<div class="t" style="left:524.88px;top:180.00px;font-size:9.8px;color:#444;transform:scaleX(0.9000);transform-origin:0 50%;">K</div>
<div class="t" style="left:14.64px;top:195.85px;font-size:9.5px;color:#217346;transform:scaleX(0.9700);transform-origin:0 50%;font-weight:bold;">1</div>
<div class="t" style="left:14.64px;top:210.45px;font-size:9.5px;color:#444;transform:scaleX(0.9700);transform-origin:0 50%;">2</div>
<div class="t" style="left:14.64px;top:225.05px;font-size:9.5px;color:#444;transform:scaleX(0.9700);transform-origin:0 50%;">3</div>
<div class="t" style="left:14.64px;top:239.65px;font-size:9.5px;color:#444;transform:scaleX(0.9700);transform-origin:0 50%;">4</div>
<div class="t" style="left:14.64px;top:254.25px;font-size:9.5px;color:#444;transform:scaleX(0.9700);transform-origin:0 50%;">5</div>
<div class="t" style="left:14.64px;top:268.85px;font-size:9.5px;color:#444;transform:scaleX(0.9700);transform-origin:0 50%;">6</div>
<div class="t" style="left:14.64px;top:283.45px;font-size:9.5px;color:#444;transform:scaleX(0.9700);transform-origin:0 50%;">7</div>
<div class="t" style="left:14.64px;top:298.05px;font-size:9.5px;color:#444;transform:scaleX(0.9700);transform-origin:0 50%;">8</div>
<div class="t" style="left:14.64px;top:312.65px;font-size:9.5px;color:#444;transform:scaleX(0.9700);transform-origin:0 50%;">9</div>
<div class="t" style="left:12.08px;top:327.25px;font-size:9.5px;color:#444;transform:scaleX(0.9700);transform-origin:0 50%;">10</div>
<div class="t" style="left:12.42px;top:341.85px;font-size:9.5px;color:#444;transform:scaleX(0.9700);transform-origin:0 50%;">11</div>
<div class="t" style="left:12.08px;top:356.45px;font-size:9.5px;color:#444;transform:scaleX(0.9700);transform-origin:0 50%;">12</div>
<div class="t" style="left:12.08px;top:371.05px;font-size:9.5px;color:#444;transform:scaleX(0.9700);transform-origin:0 50%;">13</div>
<div class="t" style="left:12.08px;top:385.65px;font-size:9.5px;color:#444;transform:scaleX(0.9700);transform-origin:0 50%;">14</div>
<div class="t" style="left:12.08px;top:400.25px;font-size:9.5px;color:#444;transform:scaleX(0.9700);transform-origin:0 50%;">15</div>
<div class="t" style="left:12.08px;top:414.85px;font-size:9.5px;color:#444;transform:scaleX(0.9700);transform-origin:0 50%;">16</div>
<div class="t" style="left:12.08px;top:429.45px;font-size:9.5px;color:#444;transform:scaleX(0.9700);transform-origin:0 50%;">17</div>
<div class="t" style="left:12.08px;top:444.05px;font-size:9.5px;color:#444;transform:scaleX(0.9700);transform-origin:0 50%;">18</div>
<div class="t" style="left:12.08px;top:458.65px;font-size:9.5px;color:#444;transform:scaleX(0.9700);transform-origin:0 50%;">19</div>
<svg class="a" style="left:9px;top:177px;" width="18" height="15" viewBox="0 0 18 15"><polygon points="15,5 15,12.6 6.5,12.6" fill="#c4c4c4"/></svg>
<div class="a" style="left:25.2px;top:191.4px;width:59.4px;height:16.8px;background:transparent;border:2px solid #26734b"></div>
<div class="t" style="left:43.70px;top:195.70px;font-size:10px;color:#111;transform:scaleX(0.9394);transform-origin:0 50%;">22-08-18</div>
<div class="a" style="left:81.6px;top:205.6px;width:4.2px;height:4.2px;background:#217346;border:0.8px solid #fff"></div>
<svg class="a" style="left:81px;top:203px;" width="10" height="10" viewBox="0 0 10 10"><path d="M5.2 0.8v8.4M1 5h8.4" stroke="#111" stroke-width="1.5" fill="none"/></svg>
<div class="a" style="left:576px;top:180px;width:10.6px;height:10.3px;background:#fff;border:1px solid #c8c8c8"></div>
<svg class="a" style="left:578.3px;top:183.3px;" width="6" height="4" viewBox="0 0 6 4"><polygon points="0.4,3.4 5.6,3.4 3,0.6" fill="#555"/></svg>
<div class="a" style="left:576px;top:190.3px;width:10.6px;height:259px;background:#fff;border:1px solid #c8c8c8"></div>
<div class="a" style="left:576.5px;top:449.3px;width:9.6px;height:14px;background:#d0d0d0;"></div>
<div class="a" style="left:576px;top:463.5px;width:10.6px;height:10.8px;background:#fff;border:1px solid #c8c8c8"></div>
<svg class="a" style="left:578.3px;top:467.3px;" width="6" height="4" viewBox="0 0 6 4"><polygon points="0.4,0.6 5.6,0.6 3,3.4" fill="#555"/></svg>
<div class="a" style="left:9px;top:474.2px;width:564.3px;height:1px;background:#c9c9c9;"></div>
<svg class="a" style="left:26px;top:480.5px;" width="6" height="7" viewBox="0 0 6 7"><polygon points="4.6,0.6 4.6,6.4 1,3.5" fill="#b8b8b8"/></svg>
<svg class="a" style="left:47px;top:480.5px;" width="6" height="7" viewBox="0 0 6 7"><polygon points="1.4,0.6 1.4,6.4 5,3.5" fill="#b8b8b8"/></svg>
<div class="a" style="left:81.5px;top:474.2px;width:47px;height:17.8px;background:#fff;border-left:1px solid #c9c9c9;border-right:1px solid #c9c9c9;border-bottom:1.8px solid #217346"></div>
<div class="t" style="left:89.00px;top:478.90px;font-size:10px;color:#217346;transform:scaleX(0.9240);transform-origin:0 50%;font-weight:bold;">Sheet1</div>
<svg class="a" style="left:152.2px;top:477.7px;" width="12" height="12" viewBox="0 0 12 12"><circle cx="6" cy="6" r="5.2" fill="#fff" stroke="#5a5a5a" stroke-width="1.1"/><path d="M6 3.2v5.6M3.2 6h5.6" stroke="#444" stroke-width="1.3"/></svg>
<svg class="a" style="left:356px;top:480px;" width="3" height="9" viewBox="0 0 3 9"><circle cx="1.5" cy="1.2" r="0.7" fill="#777"/><circle cx="1.5" cy="4.4" r="0.7" fill="#777"/><circle cx="1.5" cy="7.6" r="0.7" fill="#777"/></svg>
<div class="a" style="left:369.5px;top:479.5px;width:10.5px;height:10.3px;background:#fff;border:1px solid #c8c8c8"></div>
<svg class="a" style="left:372.7px;top:481.7px;" width="4" height="6" viewBox="0 0 4 6"><polygon points="3.4,0.4 3.4,5.6 0.6,3" fill="#555"/></svg>
<div class="a" style="left:379.5px;top:479.5px;width:167px;height:10.3px;background:#fff;border:1px solid #c8c8c8"></div>
<div class="a" style="left:546.5px;top:480px;width:17px;height:9.3px;background:#d0d0d0;"></div>
<div class="a" style="left:563px;top:479.5px;width:10.7px;height:10.3px;background:#fff;border:1px solid #c8c8c8"></div>
<svg class="a" style="left:566.5px;top:481.7px;" width="4" height="6" viewBox="0 0 4 6"><polygon points="0.6,0.4 0.6,5.6 3.4,3" fill="#444"/></svg>
<div class="a" style="left:9px;top:494.5px;width:582px;height:17.5px;background:#17633a;"></div>
<div class="a" style="left:9px;top:511px;width:582px;height:1px;background:#114d2c;"></div>
<div class="t" style="left:13.50px;top:497.89px;font-size:8.8px;color:#fff;transform:scaleX(0.7953);transform-origin:0 50%;font-weight:bold;">READY</div>
<div class="a" style="left:369.5px;top:494.5px;width:24.5px;height:17px;background:#155232;"></div>
<svg class="a" style="left:375.7px;top:497.3px;" width="11" height="10" viewBox="0 0 11 10"><path d="M0.6 0.6h9.4v8.6h-9.4zM0.6 3.4h9.4M0.6 6.3h9.4M3.7 0.6v8.6M6.9 0.6v8.6" fill="none" stroke="#fff" stroke-width="1"/></svg>
<svg class="a" style="left:404px;top:498px;" width="11" height="10" viewBox="0 0 11 10"><rect x="0.5" y="0.5" width="10" height="9" fill="none" stroke="#d7ebe0" stroke-width="1"/><rect x="3" y="2.4" width="5" height="5.2" fill="none" stroke="#d7ebe0" stroke-width="0.9"/><path d="M4.4 4h2.2M4.4 5.8h2.2" stroke="#d7ebe0" stroke-width="0.6"/></svg>
<svg class="a" style="left:431px;top:498px;" width="11" height="10" viewBox="0 0 11 10"><rect x="0.5" y="0.5" width="10" height="9" fill="none" stroke="#fff" stroke-width="1.1"/><rect x="4" y="0.5" width="4.4" height="4.6" fill="#fff"/><path d="M4 0.5v9" stroke="#fff" stroke-width="0.7"/></svg>
<div class="a" style="left:453.5px;top:502.6px;width:4.5px;height:1.4px;background:#fff;"></div>
<div class="a" style="left:462px;top:502.8px;width:74px;height:1px;background:#cfe6d9;"></div>
<div class="a" style="left:497.6px;top:497.7px;width:3.3px;height:10px;background:#fff;"></div>
<svg class="a" style="left:537.5px;top:500px;" width="7" height="7" viewBox="0 0 7 7"><path d="M3.5 0.4v6.2M0.4 3.5h6.2" stroke="#fff" stroke-width="1.5"/></svg>
<div class="t" style="left:557.00px;top:498.39px;font-size:8.8px;color:#fff;transform:scaleX(0.8575);transform-origin:0 50%;">100%</div>
</div></div>
<div class="a" id="frame"></div>
<div class="a" id="ov" style="left:0;top:0;width:600px;height:519px">
<div class="a" id="rb" style="left:588.5px;top:37px;width:2.4px;height:457.5px;background:#4f6f5e"></div>
<div class="a" style="left:590.9px;top:37px;width:9px;height:476px;background:#fff"></div>
<div class="t" style="left:8.5px;top:8.6px;font-size:13.3px;font-weight:bold;color:#000;transform:scaleX(0.95);transform-origin:0 50%">Select the cell</div>
<div class="a" style="left:37.2px;top:27px;width:2px;height:168px;background:#000"></div>
<svg class="a" style="left:33px;top:192px" width="10" height="8"><polygon points="1,0.5 9.5,0.5 5.2,7.7" fill="#000"/></svg>
</div>
</body>
</html>
